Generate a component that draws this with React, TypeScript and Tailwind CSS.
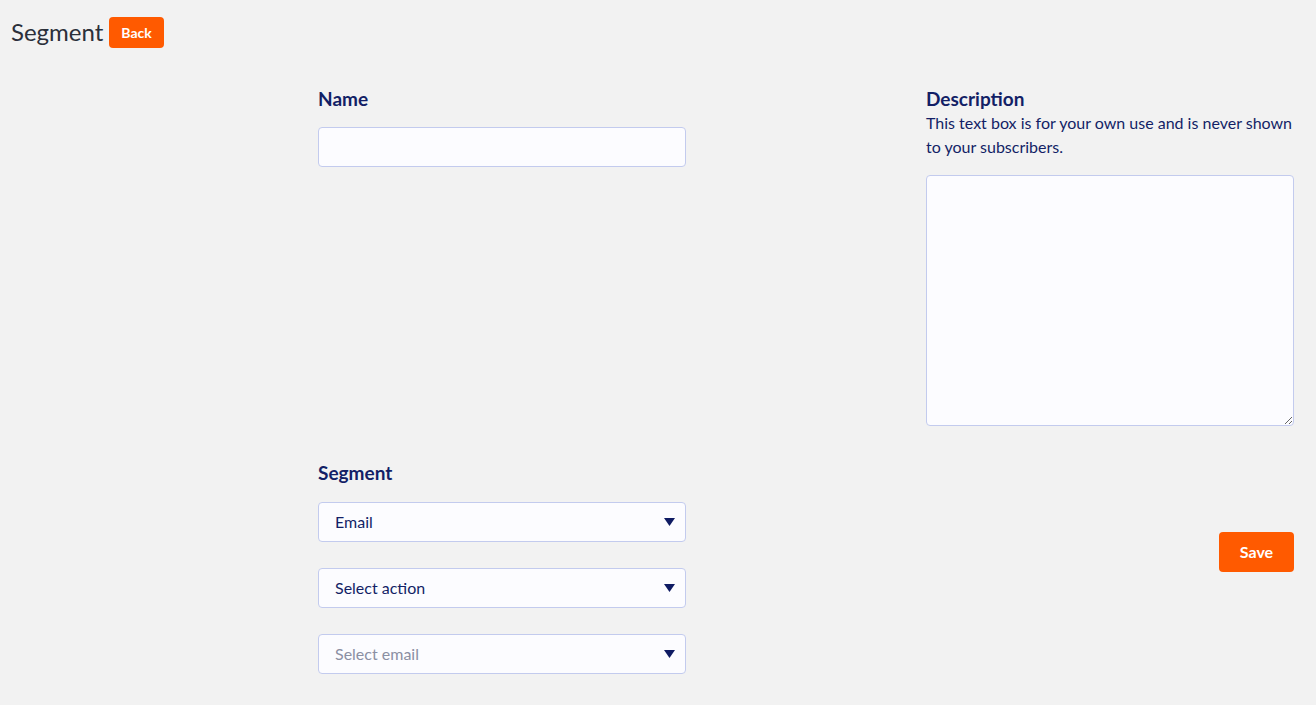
import { useState } from 'react'

function Arrow() {
  return (
    <svg width="11" height="8" viewBox="0 0 11 8" className="absolute right-[10px] top-1/2 -translate-y-1/2 pointer-events-none">
      <path d="M0 0 H11 L5.5 8 Z" fill="#0f1b63" />
    </svg>
  )
}

function SelectBox({ value, placeholder }: { value?: string; placeholder: string }) {
  return (
    <div className="relative w-[368px] h-[40px] bg-[#fcfcff] border border-[#c3cbee] rounded-[4px] flex items-center pl-4">
      <span className={value ? 'text-[16px] text-[#131f66]' : 'text-[16px] text-[#8b8fa3]'}>
        {value || placeholder}
      </span>
      <Arrow />
    </div>
  )
}

export default function App() {
  const [name, setName] = useState('')
  const [desc, setDesc] = useState('')

  return (
    <div className="min-h-[705px] bg-[#f2f2f2] font-['Lato',sans-serif]">
      <div className="flex items-center gap-[6px] pl-[11px] pt-[17px]">
        <h1 className="text-[24px] text-[#2b2f3a] leading-none -mt-[1px]">Segment</h1>
        <button className="h-[31px] px-[12px] bg-[#ff5a00] text-white text-[14px] font-bold rounded-[4px]">
          Back
        </button>
      </div>

      <div className="pl-[318px] pr-[22px] pt-[39px]">
        <div className="flex justify-between">
          <div className="w-[368px]">
            <label className="block text-[19px] font-bold text-[#131f66] leading-[24px]">Name</label>
            <input
              value={name}
              onChange={e => setName(e.target.value)}
              className="mt-[16px] w-[368px] h-[40px] bg-[#fcfcff] border border-[#c3cbee] rounded-[4px] px-4 outline-none"
            />
          </div>
          <div className="w-[368px]">
            <label className="block text-[19px] font-bold text-[#131f66] leading-[24px]">Description</label>
            <p className="text-[16px] text-[#131f66] leading-[24px]">
              This text box is for your own use and is never shown to your subscribers.
            </p>
            <textarea
              value={desc}
              onChange={e => setDesc(e.target.value)}
              className="mt-[16px] block w-[368px] h-[251px] bg-[#fcfcff] border border-[#c3cbee] rounded-[4px] outline-none"
            />
          </div>
        </div>

        <div className="flex justify-between mt-[35px]">
          <div className="w-[368px]">
            <label className="block text-[19px] font-bold text-[#131f66] leading-[24px]">Segment</label>
            <div className="mt-[17px] flex flex-col gap-[26px]">
              <SelectBox value="Email" placeholder="Email" />
              <SelectBox value="Select action" placeholder="Select action" />
              <SelectBox placeholder="Select email" />
            </div>
          </div>
          <div className="pt-[71px]">
            <button className="w-[75px] h-[40px] bg-[#ff5a00] text-white text-[16px] font-bold rounded-[4px]">
              Save
            </button>
          </div>
        </div>
      </div>
    </div>
  )
}
